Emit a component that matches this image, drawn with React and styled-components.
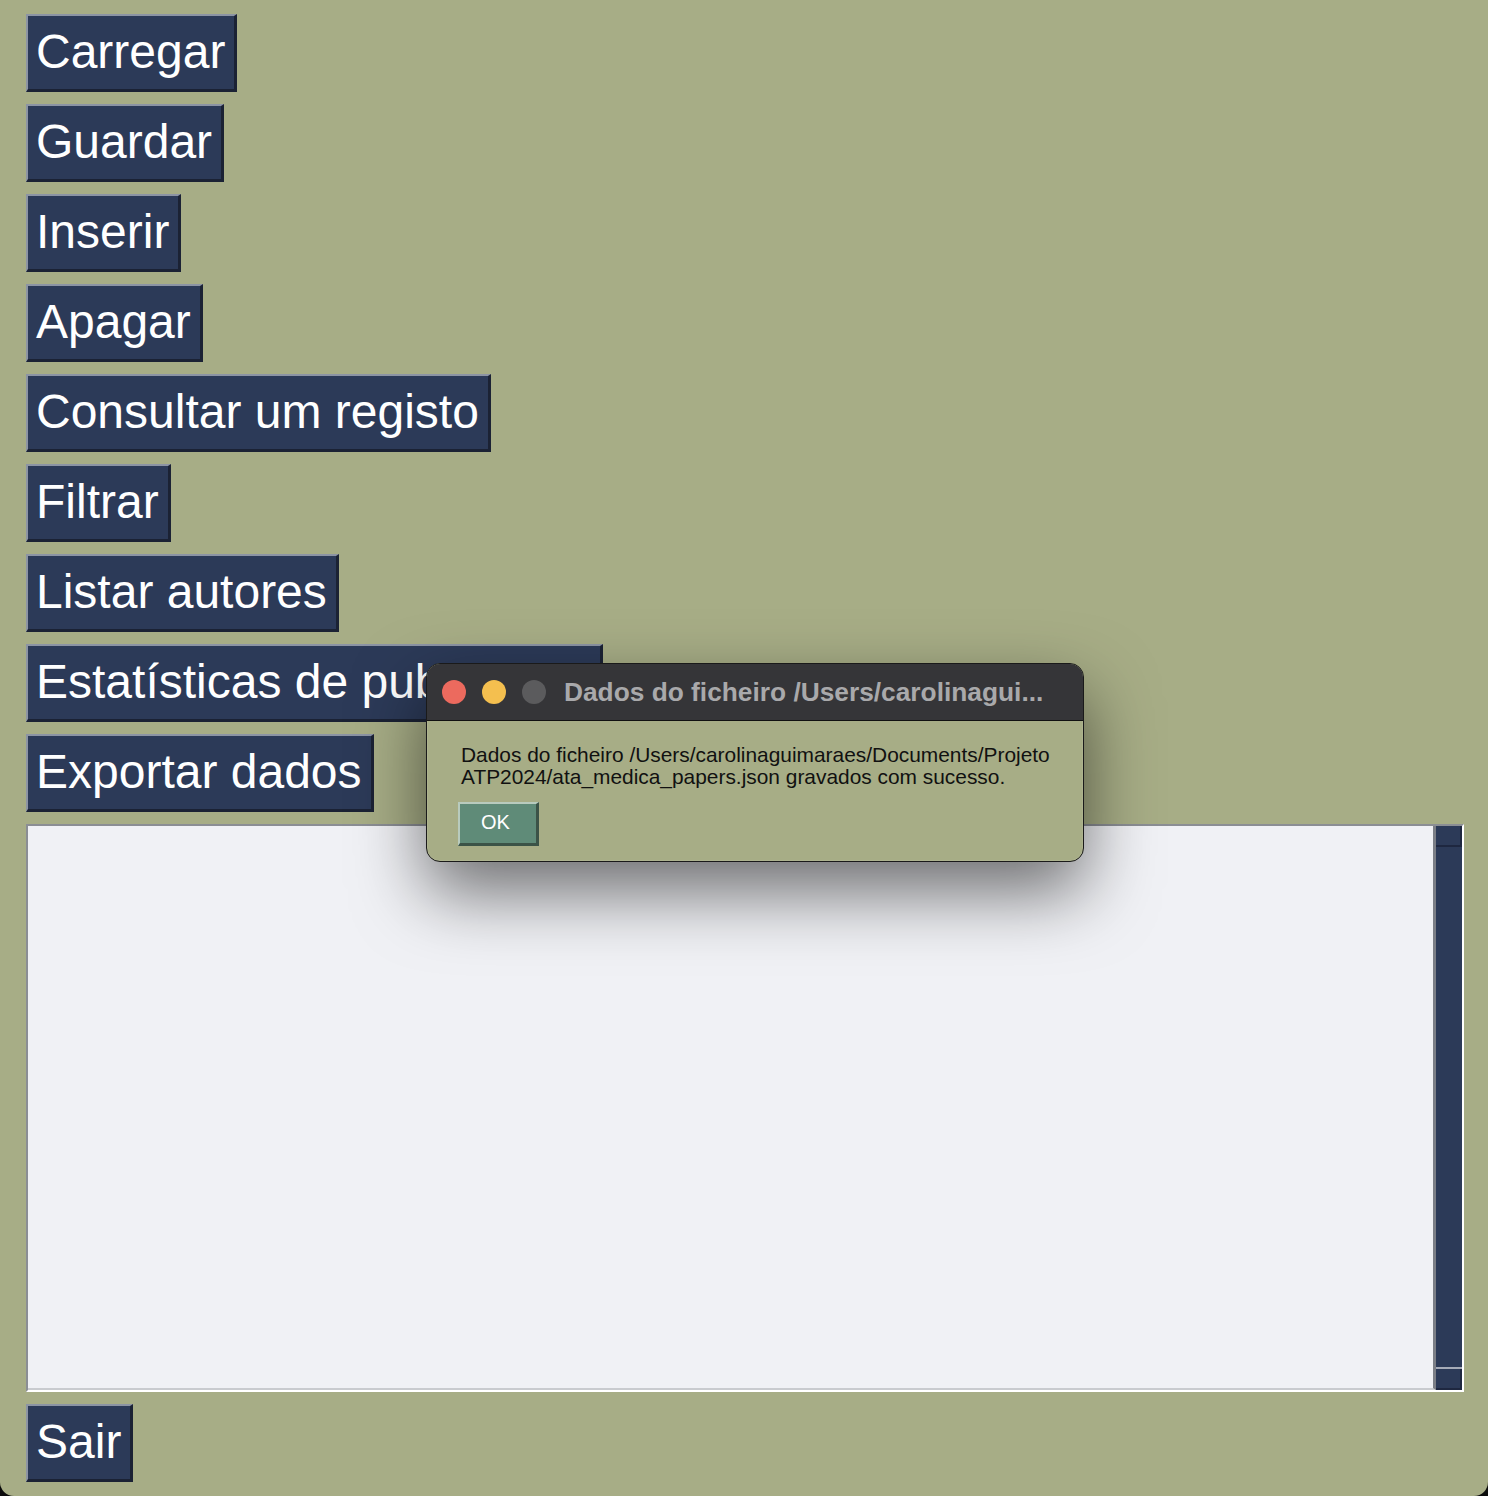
import React from "react";
import styled, { createGlobalStyle } from "styled-components";

const Global = createGlobalStyle`
  html, body { margin: 0; padding: 0; background: #0b0b0b; }
  body { font-family: "Liberation Sans", Arial, sans-serif; }
  * { box-sizing: border-box; }
`;

const Window = styled.div`
  position: relative;
  width: 1488px;
  height: 1496px;
  background: #a7ad86;
  border-radius: 0 0 14px 14px;
  padding: 14px 24px 14px 26px;
  display: flex;
  flex-direction: column;
  align-items: flex-start;
  gap: 12px;
  overflow: hidden;
`;

const TkButton = styled.button`
  height: 78px;
  margin: 0;
  padding: 0 9px 2px 8px;
  background: #2c3a58;
  color: #ffffff;
  font-family: "Liberation Sans", Arial, sans-serif;
  font-size: 48px;
  line-height: 72px;
  white-space: nowrap;
  border-style: solid;
  border-width: 2px 3px 3px 2px;
  border-color: #8c94a4 #1b2234 #1b2234 #8c94a4;
  text-align: left;
  cursor: pointer;
`;

const Frame = styled.div`
  align-self: stretch;
  height: 568px;
  display: flex;
  border-style: solid;
  border-width: 2px;
  border-color: #8b8e94 #ffffff #ffffff #8b8e94;
`;

const TextPane = styled.div`
  flex: 1;
  background: #f0f1f5;
  border-right: 3px solid #7b7e86;
  border-bottom: 2px solid #c9cbcf;
`;

const Scrollbar = styled.div`
  width: 26px;
  display: flex;
  flex-direction: column;
  background: #2c3a58;
`;

const Arrow = styled.div`
  height: 21px;
  background: #2c3a58;
  border-right: 2px solid #1e2740;
  border-bottom: 2px solid #1e2740;
  box-shadow: ${(p) => (p.$top ? "0 2px 0 #a6abb8" : "0 -2px 0 #a6abb8")};
`;

const Trough = styled.div`
  flex: 1;
  background: #2c3a58;
`;

const Dialog = styled.div`
  position: absolute;
  left: 426px;
  top: 663px;
  width: 658px;
  height: 199px;
  background: #a7ad86;
  border: 1px solid #1a1a1a;
  border-radius: 14px;
  overflow: hidden;
  box-shadow: 0 30px 70px rgba(0, 0, 0, 0.55), 0 0 0 1px rgba(255, 255, 255, 0.08) inset;
  display: flex;
  flex-direction: column;
`;

const TitleBar = styled.div`
  height: 57px;
  flex: none;
  background: #353538;
  border-bottom: 1px solid #111;
  display: flex;
  align-items: center;
  padding-left: 15px;
  gap: 16px;
`;

const Light = styled.span`
  width: 24px;
  height: 24px;
  border-radius: 50%;
  background: ${(p) => p.$color};
  flex: none;
`;

const Title = styled.div`
  margin-left: 2px;
  color: #a9a9ab;
  font-family: "Liberation Sans", Arial, sans-serif;
  font-weight: bold;
  font-size: 26.3px;
  white-space: nowrap;
`;

const Body = styled.div`
  padding: 23px 10px 0 31px;
  display: flex;
  flex-direction: column;
  align-items: flex-start;
`;

const Message = styled.p`
  margin: 0 0 14px 3px;
  color: #111;
  font-size: 20.9px;
  line-height: 22px;
  white-space: nowrap;
`;

const OkButton = styled.button`
  width: 81px;
  height: 44px;
  margin: 0;
  padding: 0 0 2px 21px;
  background: #5f8b78;
  color: #fff;
  font-family: "Liberation Sans", Arial, sans-serif;
  font-size: 20px;
  border-style: solid;
  border-width: 2px 3px 3px 2px;
  border-color: #b8cbbe #3b5347 #3b5347 #b8cbbe;
  text-align: left;
`;

const labels = [
  "Carregar",
  "Guardar",
  "Inserir",
  "Apagar",
  "Consultar um registo",
  "Filtrar",
  "Listar autores",
  "Estatísticas de publicação",
  "Exportar dados",
];

export default function App() {
  return (
    <>
      <Global />
      <Window>
        {labels.map((l) => (
          <TkButton key={l}>{l}</TkButton>
        ))}
        <Frame>
          <TextPane />
          <Scrollbar>
            <Arrow $top />
            <Trough />
            <Arrow />
          </Scrollbar>
        </Frame>
        <TkButton>Sair</TkButton>
        <Dialog>
          <TitleBar>
            <Light $color="#ec6a5e" />
            <Light $color="#f4bf4f" />
            <Light $color="#5b5b5d" />
            <Title>Dados do ficheiro /Users/carolinagui...</Title>
          </TitleBar>
          <Body>
            <Message>
              Dados do ficheiro /Users/carolinaguimaraes/Documents/Projeto
              <br />
              ATP2024/ata_medica_papers.json gravados com sucesso.
            </Message>
            <OkButton>OK</OkButton>
          </Body>
        </Dialog>
      </Window>
    </>
  );
}
